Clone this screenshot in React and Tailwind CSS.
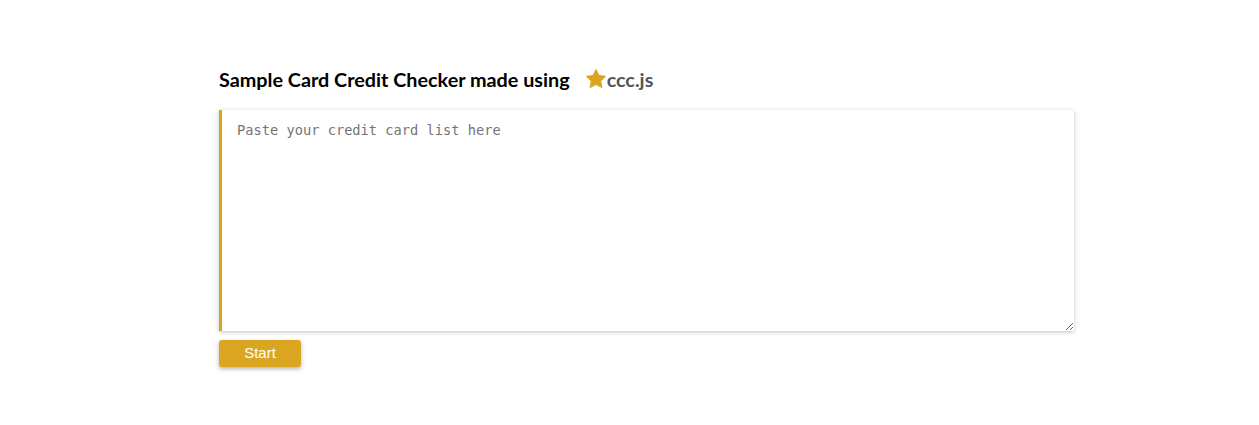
import React from "react";

const Star = () => (
  <svg width="22" height="22" viewBox="0 0 24 24" className="inline-block -mt-[2px]">
    <path
      d="M12 1.5l3.2 6.6 7.3 1-5.3 5.1 1.3 7.2L12 18l-6.5 3.4 1.3-7.2L1.5 9.1l7.3-1z"
      fill="#DAA520"
      stroke="#DAA520"
      strokeWidth="1"
      strokeLinejoin="round"
    />
  </svg>
);

const App = () => {
  return (
    <div className="min-h-[425px] bg-white pl-[219px] pt-[68px]">
      <h1 className="flex items-center text-[19.8px] font-bold text-black font-['Lato',sans-serif] h-[24px]">
        <span>Sample Card Credit Checker made using</span>
        <span className="ml-[15px] flex items-center text-[#555]">
          <Star />
          <span>ccc.js</span>
        </span>
      </h1>
      <textarea
        className="mt-[18px] block w-[855px] h-[221px] border-l-[3px] border-[#DAA520] bg-white px-[15px] py-[10px] text-[13.7px] font-['DejaVu_Sans_Mono',monospace] text-black placeholder:text-[#757575] shadow-[0_1px_4px_rgba(0,0,0,0.25)] outline-none"
        placeholder="Paste your credit card list here"
      />
      <button className="mt-[9px] block w-[82px] h-[27px] rounded-[3px] bg-[#DAA520] text-white text-[15px] font-['Liberation_Sans',sans-serif] shadow-[0_2px_4px_rgba(0,0,0,0.3)]">
        Start
      </button>
    </div>
  );
};

export default App;
